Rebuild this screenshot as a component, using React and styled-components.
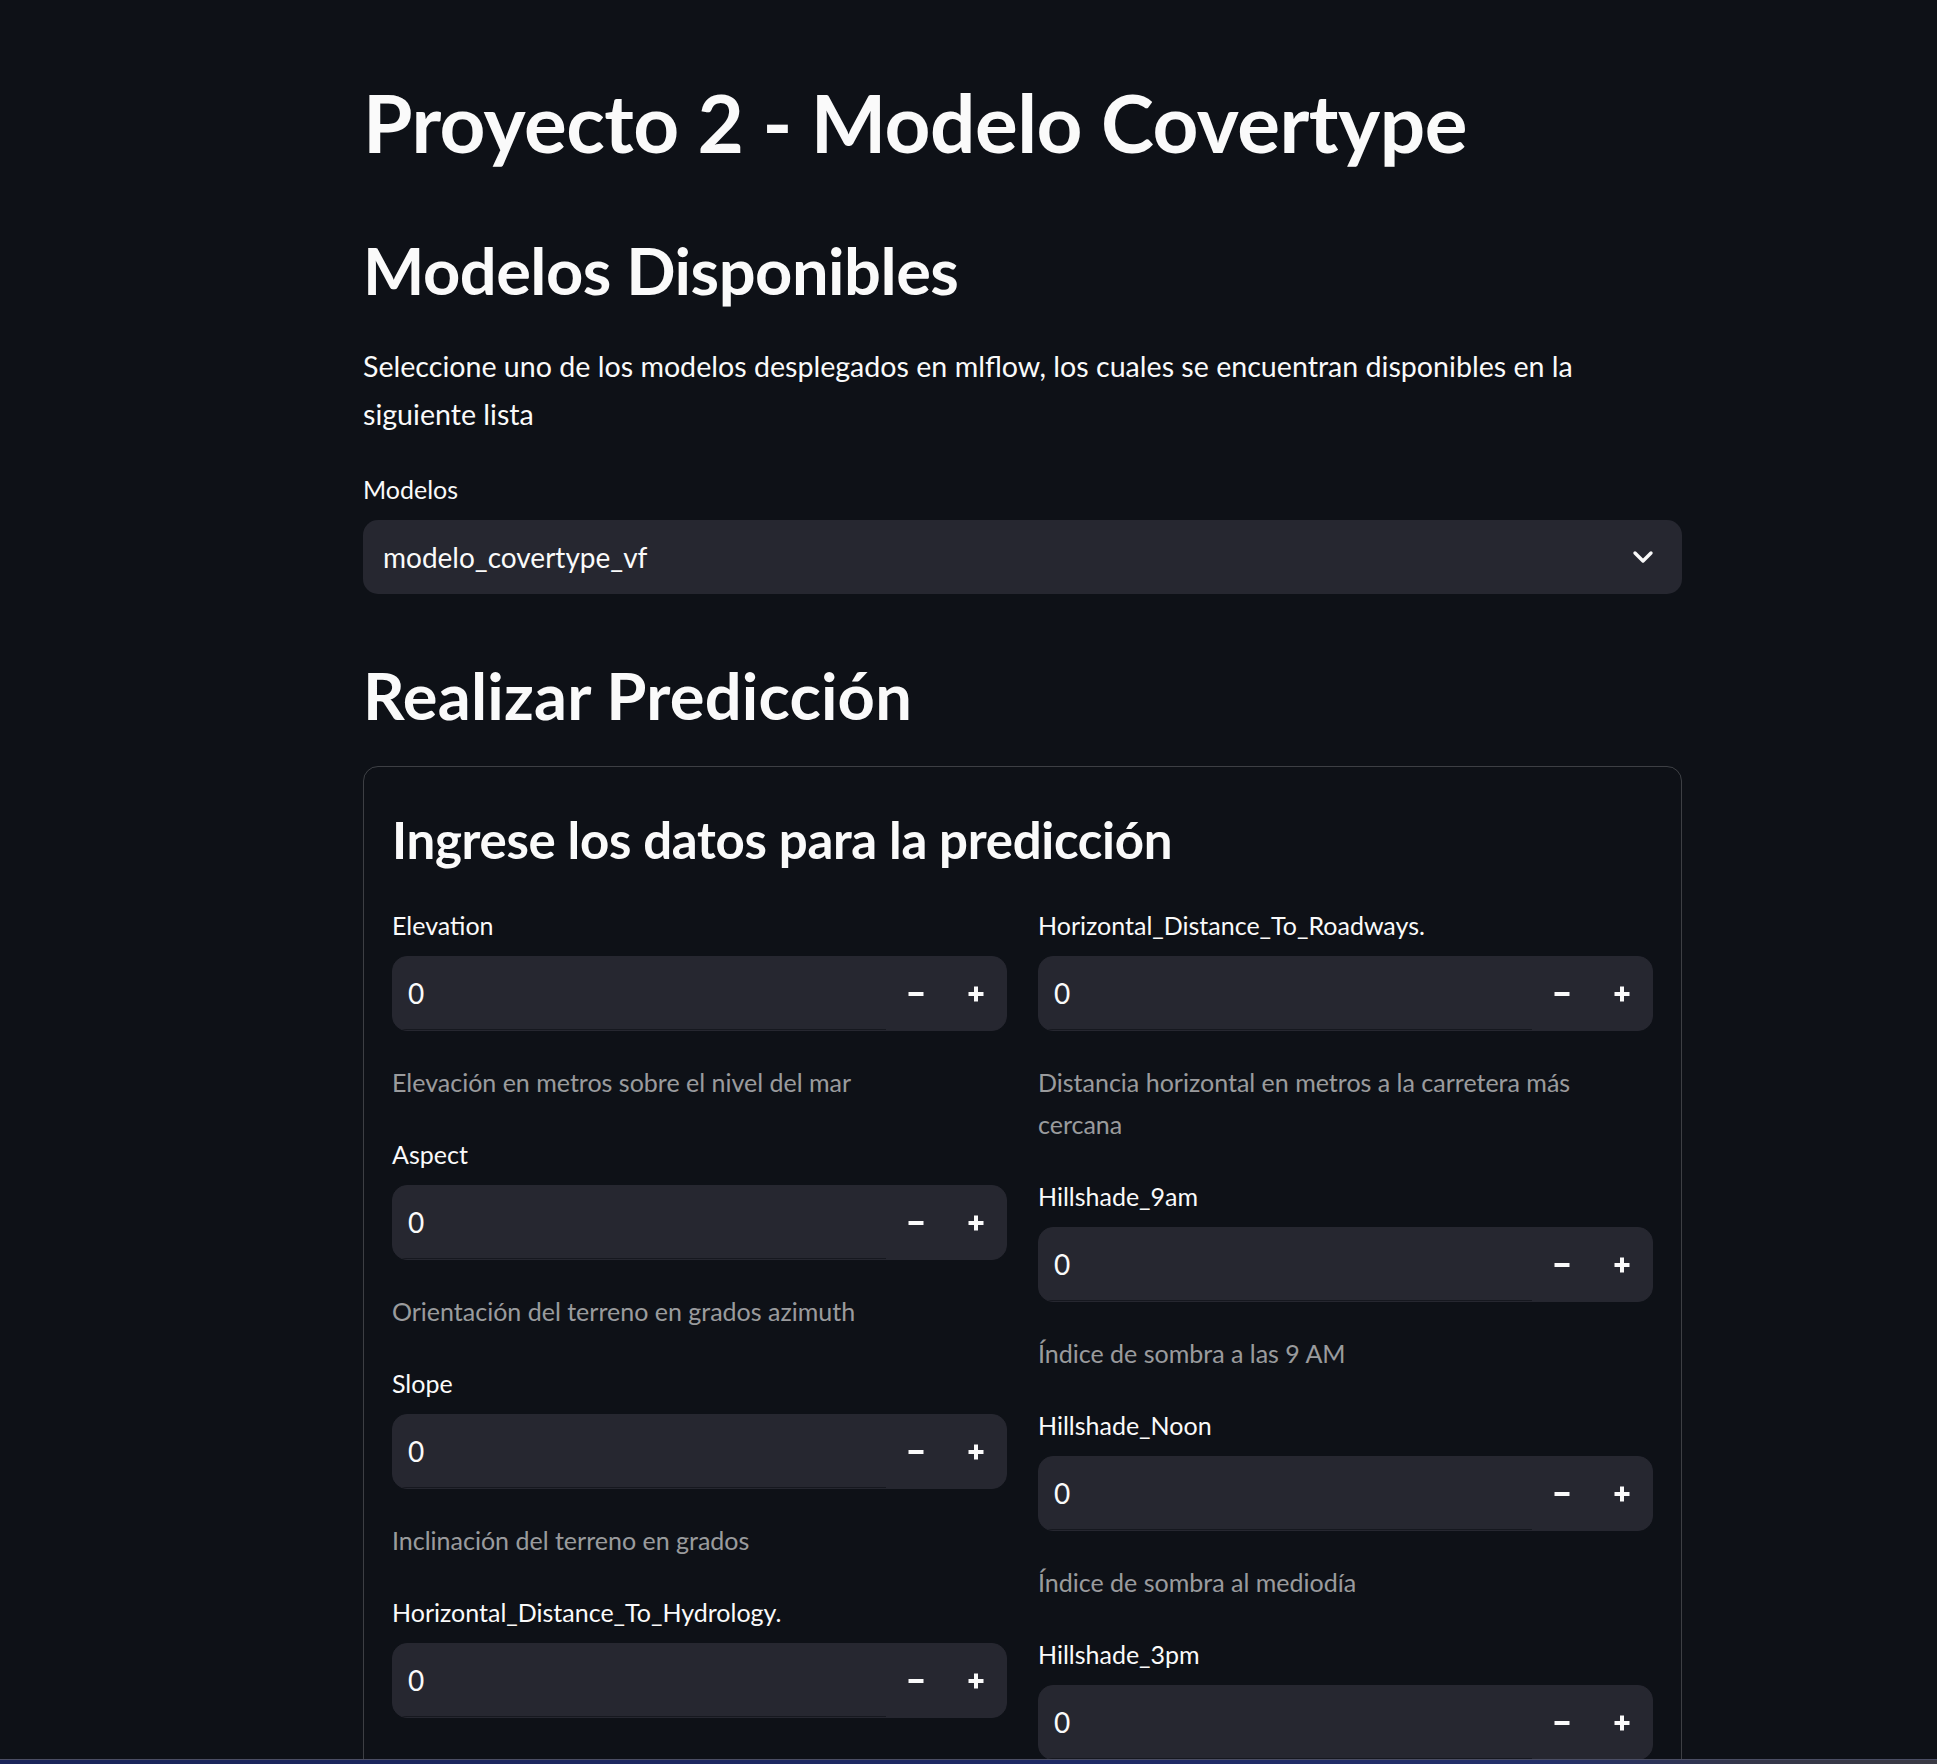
import styled, { createGlobalStyle } from "styled-components";

const GlobalStyle = createGlobalStyle`
  html, body {
    margin: 0;
    background: #0e1117;
  }
  body {
    font-family: Lato, "Noto Sans", sans-serif;
    color: #fafafa;
    -webkit-font-smoothing: antialiased;
  }
`;

const Page = styled.main`
  width: 1319px;
  margin-left: 363px;
  padding: 73px 0 200px;
  display: flex;
  flex-direction: column;
`;

const Title = styled.h1`
  margin: 0;
  font-size: 80px;
  line-height: 98px;
  font-weight: 700;
  letter-spacing: -0.5px;
`;

const SectionTitle = styled.h2`
  margin: ${(p) => p.$top}px 0 0;
  font-size: 65px;
  line-height: 80px;
  font-weight: 700;
  letter-spacing: ${(p) => p.$spacing || -0.5}px;
`;

const Text = styled.p`
  margin: 32px 0 0;
  max-width: 1270px;
  font-size: 28.6px;
  line-height: 48px;
`;

const Label = styled.label`
  display: block;
  font-size: 25px;
  line-height: 42px;
  margin-bottom: 10px;
`;

const SelectWrap = styled.div`
  margin-top: 30px;
`;

const SelectBox = styled.div`
  height: 74px;
  box-sizing: border-box;
  border-radius: 15px;
  background: #262730;
  display: flex;
  align-items: center;
  justify-content: space-between;
  padding: 0 28px 0 20px;
  font-size: 28px;
`;

const Card = styled.section`
  margin-top: 31px;
  border: 1px solid rgba(250, 250, 250, 0.2);
  border-radius: 15px;
  padding: 28px 28px 40px;
`;

const CardTitle = styled.h3`
  margin: 13px 0 0;
  font-size: 51px;
  line-height: 64px;
  font-weight: 700;
  letter-spacing: -0.3px;
`;

const Columns = styled.div`
  margin-top: 32px;
  display: grid;
  grid-template-columns: 1fr 1fr;
  column-gap: 31px;
  align-items: start;
`;

const Column = styled.div`
  display: flex;
  flex-direction: column;
  gap: 30px;
`;

const Field = styled.div`
  display: flex;
  flex-direction: column;
`;

const InputShell = styled.div`
  height: 75px;
  box-sizing: border-box;
  border-radius: 15px;
  border: 1px solid #262730;
  background: #262730;
  display: flex;
  align-items: stretch;
  overflow: hidden;
`;

const Value = styled.div`
  flex: 1;
  display: flex;
  align-items: center;
  padding-left: 15px;
  font-size: 28px;
  border-bottom: 1px solid #16181f;
`;

const StepButton = styled.button`
  width: 60px;
  border: none;
  background: transparent;
  padding: 0;
  display: flex;
  align-items: center;
  justify-content: center;
  color: #fafafa;
  cursor: pointer;
`;

const Help = styled.div`
  margin-top: 30px;
  font-size: 25px;
  line-height: 42px;
  color: rgba(250, 250, 250, 0.6);
  padding-right: 40px;
`;

const BottomStrip = styled.div`
  position: fixed;
  left: 0;
  right: 0;
  bottom: 0;
  height: 4px;
  border-top: 1px solid #4a4d63;
  background: linear-gradient(90deg, #1a2459 0%, #1f2a66 60%, #24306a 80%, #34364a 90%, #3a3a44 100%);
`;

const Minus = () => (
  <svg width="16" height="16" viewBox="0 0 16 16">
    <rect x="0.5" y="6" width="15" height="4" fill="currentColor" />
  </svg>
);

const Plus = () => (
  <svg width="16" height="16" viewBox="0 0 16 16">
    <rect x="0.5" y="6" width="15" height="4" fill="currentColor" />
    <rect x="6" y="0.5" width="4" height="15" fill="currentColor" />
  </svg>
);

const Chevron = () => (
  <svg width="22" height="14" viewBox="0 0 22 14">
    <polyline
      points="3,3 11,11 19,3"
      fill="none"
      stroke="#fafafa"
      strokeWidth="3.4"
      strokeLinecap="round"
      strokeLinejoin="round"
    />
  </svg>
);

const leftFields = [
  ["Elevation", "Elevación en metros sobre el nivel del mar"],
  ["Aspect", "Orientación del terreno en grados azimuth"],
  ["Slope", "Inclinación del terreno en grados"],
  ["Horizontal_Distance_To_Hydrology.", "Distancia horizontal en metros a la fuente de agua más cercana"],
  ["Vertical_Distance_To_Hydrology.", "Distancia vertical en metros a la fuente de agua más cercana"],
];

const rightFields = [
  ["Horizontal_Distance_To_Roadways.", "Distancia horizontal en metros a la carretera más cercana"],
  ["Hillshade_9am", "Índice de sombra a las 9 AM"],
  ["Hillshade_Noon", "Índice de sombra al mediodía"],
  ["Hillshade_3pm", "Índice de sombra a las 3 PM"],
];

function NumberField({ label, help }) {
  return (
    <Field>
      <Label>{label}</Label>
      <InputShell>
        <Value>0</Value>
        <StepButton aria-label="decrement">
          <Minus />
        </StepButton>
        <StepButton aria-label="increment">
          <Plus />
        </StepButton>
      </InputShell>
      <Help>{help}</Help>
    </Field>
  );
}

export default function App() {
  return (
    <>
      <GlobalStyle />
      <Page>
        <Title>Proyecto 2 - Modelo Covertype</Title>
        <SectionTitle $top={59}>Modelos Disponibles</SectionTitle>
        <Text>
          Seleccione uno de los modelos desplegados en mlflow, los cuales se encuentran disponibles en la
          siguiente lista
        </Text>
        <SelectWrap>
          <Label>Modelos</Label>
          <SelectBox>
            <span>modelo_covertype_vf</span>
            <Chevron />
          </SelectBox>
        </SelectWrap>
        <SectionTitle $top={61} $spacing={0.2}>Realizar Predicción</SectionTitle>
        <Card>
          <CardTitle>Ingrese los datos para la predicción</CardTitle>
          <Columns>
            <Column>
              {leftFields.map(([l, h]) => (
                <NumberField key={l} label={l} help={h} />
              ))}
            </Column>
            <Column>
              {rightFields.map(([l, h]) => (
                <NumberField key={l} label={l} help={h} />
              ))}
            </Column>
          </Columns>
        </Card>
      </Page>
      <BottomStrip />
    </>
  );
}
